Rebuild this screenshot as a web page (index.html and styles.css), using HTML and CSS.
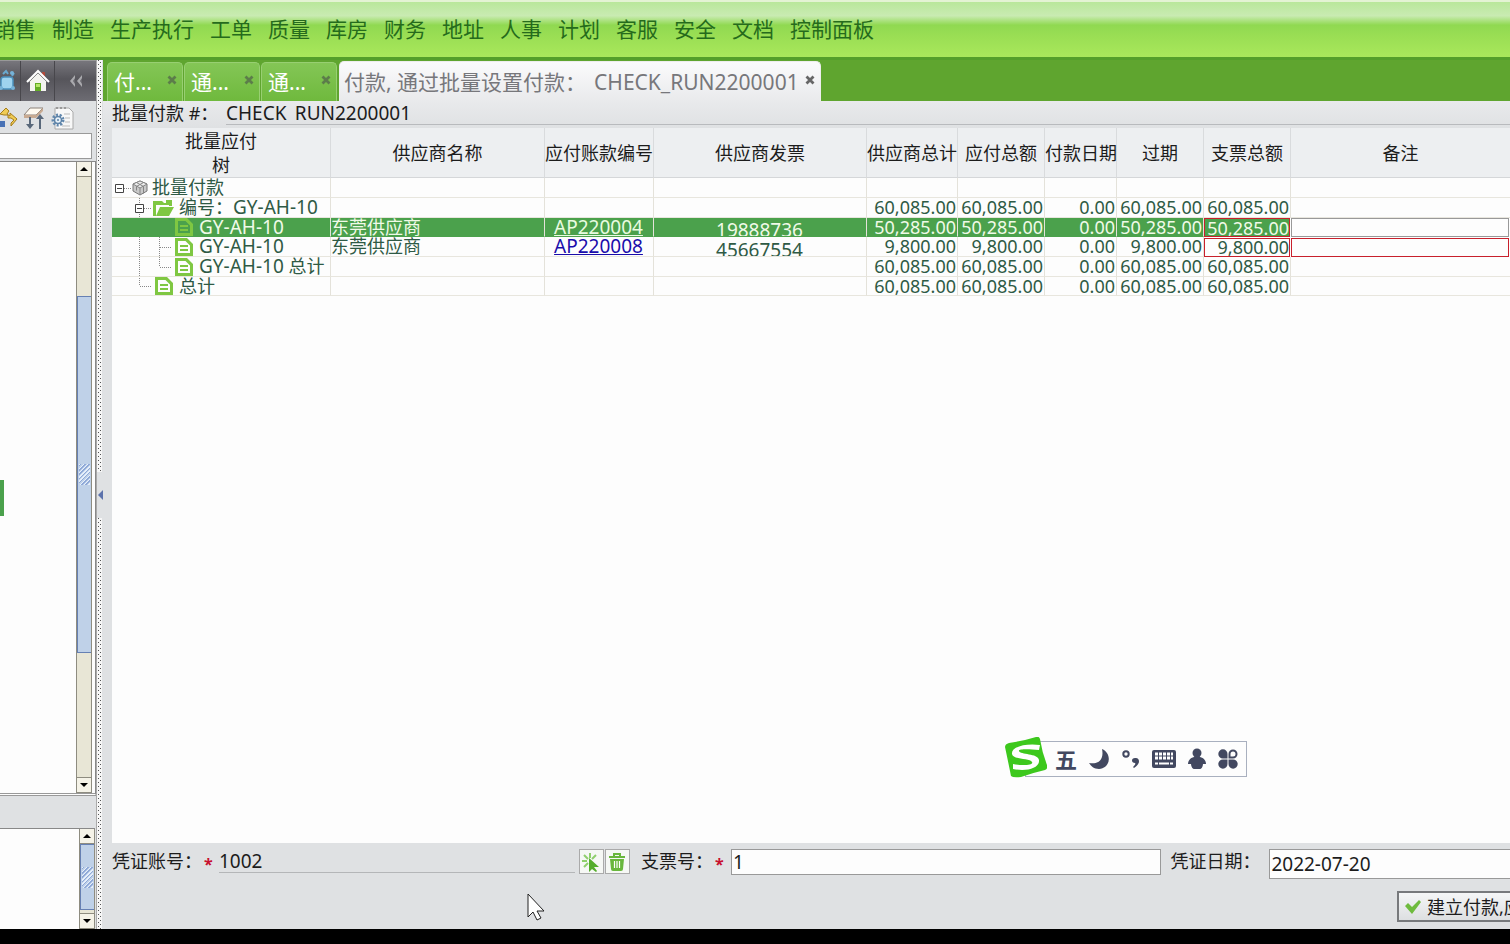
FILE: index.html
```html
<!DOCTYPE html>
<html lang="zh-CN">
<head>
<meta charset="utf-8">
<title>批量付款</title>
<link rel="stylesheet" href="styles.css">
</head>
<body>
<svg class="defs" aria-hidden="true">
  <symbol id="doc" viewBox="0 0 20 20"><path fill="#7fc742" fill-rule="evenodd" d="M1 1h12l6 6v12H1zM4 4v12h12V8.500L11.500 4z"/><path stroke="#7fc742" stroke-width="2" d="M6 9h8M6 13h8"/></symbol>
  <symbol id="close" viewBox="0 0 10 10"><path d="M1.500 1.500l7 7M8.500 1.500l-7 7" stroke="currentColor" stroke-width="2.800"/></symbol>
</svg>

<nav class="menu">
  <a href="#">销售</a><a href="#">制造</a><a href="#">生产执行</a><a href="#">工单</a><a href="#">质量</a><a href="#">库房</a><a href="#">财务</a><a href="#">地址</a><a href="#">人事</a><a href="#">计划</a><a href="#">客服</a><a href="#">安全</a><a href="#">文档</a><a href="#">控制面板</a>
</nav>

<div class="work">
  <aside class="side">
    <div class="side-head">
      <button class="icon-btn first" aria-label="刷新"><svg width="16" height="24" viewBox="0 0 16 24"><rect x="1" y="8" width="12" height="12" rx="3" fill="#9fd3ee" stroke="#4b91bd" stroke-width="1.500"/><path d="M3 5l3-3 2 3M12 7l2-3" stroke="#6aa9cf" stroke-width="2" fill="none"/><circle cx="12" cy="4" r="2" fill="#76b3d8"/><circle cx="1" cy="19" r="2" fill="#76b3d8"/><circle cx="13" cy="19" r="2" fill="#76b3d8"/></svg></button>
      <button class="icon-btn" aria-label="主页"><svg width="24" height="24" viewBox="0 0 24 24"><path d="M16 3h3v5h-3z" fill="#b04a3c"/><path d="M4 11l8-8 8 8v11H4z" fill="#f4f4f0"/><path d="M1 13L12 2l11 11" fill="none" stroke="#fff" stroke-width="2"/><path d="M3 13l9-9 9 9" fill="none" stroke="#8a8a8a"/><path d="M9 14h6v8H9z" fill="#63ac26"/><path d="M10 15h4v3h-4z" fill="#b5e66b"/></svg></button>
      <button class="icon-btn" aria-label="收起"><svg width="16" height="14" viewBox="0 0 16 14"><path d="M7 1L2 7l5 6zM14 1L9 7l5 6z" fill="#a9a9ad"/><path d="M7 4L5 7l2 3zM14 4l-2 3 2 3z" fill="#69686e"/></svg></button>
    </div>
    <div class="side-tools">
      <svg width="18" height="24" viewBox="0 0 18 24"><path d="M0 8l6-6 3 3-2 3 3 2 0-3 7 6-6 7v-3l3-3-3-2H8V9H4z" fill="#f0cc55" stroke="#a57d1b"/><path d="M0 15h5v6H0z" fill="#4972b5"/></svg>
      <svg width="22" height="24" viewBox="0 0 22 24"><path d="M7 2h13l-7 7H1z" fill="#fffaf0" stroke="#8c827a"/><path d="M1 9h12l7-7v3l-7 7H1z" fill="#c8aa91"/><path d="M7 11v8M17 23V11" stroke="#59687a" stroke-width="2"/><path d="M3 18h8l-4 5zM13 13h8l-4-5z" fill="#59687a"/></svg>
      <svg width="24" height="24" viewBox="0 0 24 24"><path d="M5 2h14l4 4v17H5z" fill="#f8f8f8" stroke="#aaa"/><path d="M6 2h12" stroke="#999" stroke-width="2" stroke-dasharray="2 2"/><path d="M14 8h6M15 12h5M15 16h5M12 20h8" stroke="#bbb"/><circle cx="8" cy="14" r="5" fill="none" stroke="#6288ad" stroke-width="3" stroke-dasharray="2 1.500"/><circle cx="8" cy="14" r="3.500" fill="#e8f1f8" stroke="#5d83a8" stroke-width="1.500"/><circle cx="8" cy="14" r="1" fill="#5d83a8"/></svg>
    </div>
    <input class="side-search" type="text" aria-label="搜索">
    <div class="side-tree">
      <div class="tree-space"><i class="tree-sel"></i></div>
      <div class="scroll">
        <button class="up" aria-label="向上"></button>
        <span class="before"></span><span class="thumb"><i></i></span><span class="after"></span>
        <button class="down" aria-label="向下"></button>
      </div>
    </div>
    <div class="side-low">
      <div class="tree-space"></div>
      <div class="scroll">
        <button class="up" aria-label="向上"></button>
        <span class="thumb full"><i></i></span><span class="rest"></span>
        <button class="down" aria-label="向下"></button>
      </div>
    </div>
  </aside>

  <div class="split"><span class="dots"></span><button class="fold" aria-label="折叠"></button><span class="dots"></span></div>

  <main class="main">
    <div class="tabs">
      <div class="tab"><span>付...</span><button class="x" aria-label="关闭"><svg width="10" height="10"><use href="#close"/></svg></button></div>
      <div class="tab"><span>通...</span><button class="x" aria-label="关闭"><svg width="10" height="10"><use href="#close"/></svg></button></div>
      <div class="tab"><span>通...</span><button class="x" aria-label="关闭"><svg width="10" height="10"><use href="#close"/></svg></button></div>
      <div class="tab active"><span>付款, 通过批量设置付款：</span><span class="run">CHECK_RUN2200001</span><button class="x" aria-label="关闭"><svg width="10" height="10"><use href="#close"/></svg></button></div>
    </div>

    <div class="caption"><span class="cap-label">批量付款 #：</span><span class="cap-value"><span class="cap-text">CHECK_RUN2200001</span></span></div>

    <div class="sheet">
      <table class="grid">
        <colgroup><col class="c-tree"><col class="c-name"><col class="c-ap"><col class="c-inv"><col class="c-total"><col class="c-sum"><col class="c-date"><col class="c-sum"><col class="c-sum"><col></colgroup>
        <thead>
          <tr><th>批量应付<br>树</th><th>供应商名称</th><th>应付账款编号</th><th>供应商发票</th><th>供应商总计</th><th>应付总额</th><th>付款日期</th><th>过期</th><th>支票总额</th><th>备注</th></tr>
        </thead>
        <tbody>
          <tr>
            <td><div class="node"><svg width="20" height="20"><path d="M3.500 6.500h8v8h-8zM5 10.500h5" fill="#fff" stroke="#444"/><path d="M12 10.500h8" stroke="#888" stroke-dasharray="1 1"/></svg><svg width="16" height="20" viewBox="0 0 16 20"><path d="M8 3l7 3v7l-7 4-7-4V6z" fill="#c9c9c9" stroke="#777"/><path d="M8 3l7 3-7 4-7-4z" fill="#ededed" stroke="#858585"/><path d="M8 10v7M4.500 4.500l7 4v7M11.500 4.500l-7 4v4" fill="none" stroke="#858585"/></svg><span class="near">批量付款</span></div></td>
            <td></td><td></td><td></td><td></td><td></td><td></td><td></td><td></td><td></td>
          </tr>
          <tr>
            <td><div class="node"><svg width="40" height="20"><path d="M27.500 0v20" stroke="#888" stroke-dasharray="1 1"/><path d="M23.500 6.500h8v8h-8zM25 10.500h5" fill="#fff" stroke="#444"/><path d="M32 10.500h7" stroke="#888" stroke-dasharray="1 1"/></svg><svg width="22" height="20" viewBox="0 0 22 20"><path d="M1 3h9l2 2h8v3h-3V7H4v11H1z" fill="#7fc742"/><path d="M14 2h6v3h-6zM8 9h14l-5 9H4z" fill="#7fc742"/></svg><span>编号：<span class="code">GY-AH-10</span></span></div></td>
            <td></td><td></td><td></td><td class="num">60,085.00</td><td class="num">60,085.00</td><td class="num">0.00</td><td class="num">60,085.00</td><td class="num">60,085.00</td><td></td>
          </tr>
          <tr class="sel">
            <td><div class="node"><svg width="62" height="20"></svg><svg width="20" height="20"><use href="#doc"/></svg><span><span class="code">GY-AH-10</span></span></div></td>
            <td>东莞供应商</td><td class="mid"><a href="#">AP220004</a></td><td class="mid inv"><div>19888736</div></td><td class="num">50,285.00</td><td class="num">50,285.00</td><td class="num">0.00</td><td class="num">50,285.00</td><td class="edit"><input class="amount" type="text" aria-label="支票总额" value="50,285.00"></td><td class="edit"><input class="note plain" type="text" aria-label="备注"></td>
          </tr>
          <tr>
            <td><div class="node"><svg width="62" height="20"><path d="M27.500 0v20M47.500 0v20M48 10.500h11" stroke="#888" stroke-dasharray="1 1"/></svg><svg width="20" height="20"><use href="#doc"/></svg><span><span class="code">GY-AH-10</span></span></div></td>
            <td>东莞供应商</td><td class="mid"><a href="#">AP220008</a></td><td class="mid inv"><div>45667554</div></td><td class="num">9,800.00</td><td class="num">9,800.00</td><td class="num">0.00</td><td class="num">9,800.00</td><td class="edit"><input class="amount" type="text" aria-label="支票总额" value="9,800.00"></td><td class="edit"><input class="note" type="text" aria-label="备注"></td>
          </tr>
          <tr>
            <td><div class="node"><svg width="62" height="20"><path d="M27.500 0v20M47.500 0v10M48 10.500h11" stroke="#888" stroke-dasharray="1 1"/></svg><svg width="20" height="20"><use href="#doc"/></svg><span><span class="code">GY-AH-10</span> 总计</span></div></td>
            <td></td><td></td><td></td><td class="num">60,085.00</td><td class="num">60,085.00</td><td class="num">0.00</td><td class="num">60,085.00</td><td class="num">60,085.00</td><td></td>
          </tr>
          <tr>
            <td><div class="node"><svg width="42" height="20"><path d="M27.500 0v10M28 10.500h11" stroke="#888" stroke-dasharray="1 1"/></svg><svg width="20" height="20"><use href="#doc"/></svg><span>总计</span></div></td>
            <td></td><td></td><td></td><td class="num">60,085.00</td><td class="num">60,085.00</td><td class="num">0.00</td><td class="num">60,085.00</td><td class="num">60,085.00</td><td></td>
          </tr>
        </tbody>
      </table>
    </div>

    <form class="pay">
      <div class="fields">
        <label class="l-acct" for="acct">凭证账号：<b>*</b></label>
        <input class="line" id="acct" type="text" value="1002">
        <button type="button" class="tool" aria-label="选择"><svg width="20" height="20" viewBox="0 0 20 20"><path d="M9 1v5M3 3l4 4M1 9h5M3 15l4-4M15 3l-4 4M9 13v3" stroke="#8fcf6c" stroke-width="2"/><path d="M8 6l10 9h-5l3 4-1 1-4-3-3 3z" fill="#54ad2b"/></svg></button>
        <button type="button" class="tool" aria-label="删除"><svg width="20" height="20" viewBox="0 0 20 20"><path d="M2 5h16M7 4V2h6v2" fill="none" stroke="#69b73d" stroke-width="2"/><path d="M3 7h14l-1 10q0 2-2 2H6q-2 0-2-2z" fill="#69b73d"/><path d="M7.500 9v7M10 9v7M12.500 9v7" stroke="#fff" stroke-width="1.200"/></svg></button>
        <label class="l-check" for="check">支票号：<b>*</b></label>
        <input class="box" id="check" type="text" value="1">
        <label class="l-date" for="date">凭证日期：</label>
        <input class="box date" id="date" type="text" value="2022-07-20">
      </div>
      <div class="actions">
        <button type="button" class="submit"><svg width="18" height="16" viewBox="0 0 18 16"><path d="M1 7l3-3 4 4 7-7 2 2-9 12z" fill="#6fbb3e"/></svg>建立付款,应</button>
      </div>
    </form>
  </main>
</div>

<div class="ime">
  <svg class="ime-logo" width="42" height="42" viewBox="0 0 42 42"><path d="M4 6Q18 4 31 0q3-1 4 2 2 13 7 26 1 4-2 5-13 3-24 7-8 1-10-1Q3 24 0 10 0 7 4 6z" fill="#3dc81d"/><path d="M35 8C20 6 6 10 7 17c1 6 18 4 20 8 2 3-9 4-19 2v5c14 3 27-1 26-9-1-7-19-5-20-9-1-2 9-2 20-1z" fill="#fff"/></svg>
  <div class="ime-bar">
    <span class="ime-mode">五</span>
    <svg width="22" height="22" viewBox="0 0 22 22"><path d="M14 1c10 4 9 19-3 20-5 0-8-3-10-6 11 2 15-5 13-14z"/></svg>
    <svg width="20" height="22" viewBox="0 0 20 22"><circle cx="5" cy="6" r="2.700" fill="none" stroke="#424860" stroke-width="2"/><path d="M14 10c5-1 6 6-1 10l-1-1c2-2 3-3 2-4-4 0-4-5 0-5z"/></svg>
    <svg width="24" height="20" viewBox="0 0 24 20"><rect y="1" width="24" height="18" rx="2"/><path d="M3 5h18M3 9h18" stroke="#fff" stroke-width="3" stroke-dasharray="3 1"/><path d="M3 14.500h3M7 14.500h10M18 14.500h3" stroke="#fff" stroke-width="2"/></svg>
    <svg width="20" height="22" viewBox="0 0 20 22"><circle cx="10" cy="5" r="4.500"/><path d="M7 9h6c4 1 6 4 6 7h-3c0 3-2 5-3 5H7c-1 0-3-2-3-5H1c0-3 2-6 6-7z"/></svg>
    <svg width="20" height="20" viewBox="0 0 20 20"><path d="M9.500 9.500H5a4.600 4.600 0 1 1 4.500-4.500zM9.500 10.500V15a4.600 4.600 0 1 1-4.500-4.500zM10.500 10.500H15a4.600 4.600 0 1 1-4.500 4.500z"/><path d="M11.500 8.500V5a3.500 3.500 0 1 1 3.500 3.500z" fill="none" stroke="#424860" stroke-width="2"/></svg>
  </div>
</div>
<svg class="cursor" width="20" height="28" viewBox="0 0 20 28"><path d="M1 1v23l5-5 4 8 4-2-4-7h7z" fill="#fff" stroke="#222"/></svg>
</body>
</html>
```
FILE: styles.css
```css
* { box-sizing: border-box; }
body {
  margin: 0;
  height: 100vh;
  display: flex;
  flex-direction: column;
  overflow: hidden;
  background: #dfe1e3;
  border-bottom: 15px solid #000;
  font: 18px/20px "Noto Sans", "Noto Sans CJK SC", sans-serif;
  color: #1c1c1c;
}
button, input { font: inherit; color: inherit; margin: 0; padding: 0; border: 0; border-radius: 0; }
button { background: none; display: flex; align-items: center; justify-content: center; flex: none; }
input { min-width: 0; outline: 0; }
svg { display: block; flex: none; }
.defs { position: absolute; width: 0; height: 0; }

.menu {
  flex: none;
  height: 60px;
  display: flex;
  gap: 16px;
  align-items: center;
  padding-bottom: 1px;
  text-indent: 0;
  border-top: 2px solid #e4f3d4;
  border-bottom: 3px solid #549f2a;
  background: linear-gradient(#b9e79b, #c9ebb2 25%, #90d951 42%, #9ade54 62%, #a9e85b);
}
.menu a { color: #256b1c; text-decoration: none; font-size: 21px; line-height: 28px; white-space: nowrap; }
.menu a:first-child { margin-left: -6px; }

.work { flex: 1; min-height: 0; display: flex; }

.side { width: 96px; flex: none; display: flex; flex-direction: column; min-height: 0; }
.side-head { height: 41px; flex: none; display: flex; border-top: 1px solid #999; background: linear-gradient(#77767c, #56555b 45%, #6d6c73); }
.icon-btn { width: 34px; border-left: 1px solid #48474c; }
.icon-btn.first { width: 20px; border-left: 0; justify-content: flex-start; }
.icon-btn:last-child { flex: 1; }
.side-tools { height: 32px; flex: none; display: flex; gap: 5px; align-items: center; padding-top: 2px; }
.side-search { height: 26px; width: 92px; flex: none; border: 1px solid #999; border-left: 0; background: #fdfdfd; }
.side-tree { flex: 1; min-height: 0; margin-top: 2px; display: flex; border: 1px solid #888; border-left: 0; border-bottom: 3px double #999; padding-right: 3px; background: #fdfdfd; }
.side-low { flex: none; height: 101px; margin-top: 32px; display: flex; border-top: 1px solid #888; margin-right: 1px; background: #fdfdfd; }
.tree-space { flex: 1; display: flex; align-items: center; }
.tree-sel { width: 4px; height: 36px; background: #4ba14c; margin-top: 41px; }
.scroll { width: 16px; flex: none; display: flex; flex-direction: column; border: 1px solid #8e8c80; border-top: 0; background: #e8e6d6; }
.scroll button { height: 15px; background: #f5f3e8; border: 0 solid #8e8c80; }
.scroll .up { border-bottom-width: 1px; }
.scroll .down { border-top-width: 1px; }
.up::after, .down::after { content: ""; border: 4px solid transparent; border-top-width: 0; border-bottom: 4px solid #000; }
.down::after { border-bottom-width: 0; border-top: 4px solid #000; }
.before { flex: 119; }
.thumb { flex: 356; display: flex; align-items: center; justify-content: center; background: #bfd1e8; border: 1px solid #6680b3; border-width: 1px 0 1px 1px; }
.after { flex: 124; }
.rest { height: 3px; }
.thumb i { width: 11px; height: 21px; background: repeating-linear-gradient(135deg, #e6effb 0 1px, #8fa9d8 1px 2px, #bfd1e8 2px 3px); }

.split { width: 7px; flex: none; display: flex; flex-direction: column; border-left: 1px solid #aaa; }
.dots {
  flex: 1;
  width: 6px;
  background:
    linear-gradient(#555 1px, transparent 1px) 1px 0 / 1px 4px repeat-y,
    linear-gradient(#555 1px, transparent 1px) 3px 2px / 1px 4px repeat-y,
    linear-gradient(90deg, #f6f6f6 5px, #dfe1e3 5px);
}
.fold { height: 46px; }
.fold::after { content: ""; border: 5px solid transparent; border-left: 0; border-right: 5px solid #5c72ac; }

.main { flex: 1; min-width: 0; display: flex; flex-direction: column; }
.tabs { height: 41px; flex: none; display: flex; gap: 1px; align-items: flex-end; padding: 1px 4px 0; background: #5fa52f; }
.tab { height: 39px; width: 76px; display: flex; align-items: center; justify-content: space-between; padding: 0 5px 0 6px; border: 1px solid #98cf72; border-bottom: 0; border-radius: 5px 5px 0 0; background: linear-gradient(#84c656, #6fb93d); color: #fff; font-size: 21px; line-height: 28px; white-space: nowrap; }
.tab .x { width: 10px; height: 10px; color: #5c7d4a; margin-bottom: 4px; }
.tab.active { height: 40px; width: auto; margin-left: 1px; padding-left: 4px; background: linear-gradient(#fbfbfc, #e9eaec); border-color: #eee; color: #77777b; }
.tab.active .x { color: #666; margin-left: 6px; }
.run { margin-left: 8px; }

.caption { height: 27px; flex: none; display: flex; padding-left: 9px; align-items: flex-start; line-height: 24px; background: linear-gradient(#e9eaec, #dfe1e3); }
.cap-label { width: 114px; flex: none; }
.cap-value { flex: 1; height: 24px; border-bottom: 1px solid #b8babd; }
.cap-text { display: block; height: 20px; overflow: hidden; font-size: 19px; }

.sheet { flex: 1; min-height: 0; overflow: hidden; margin-left: 9px; background: #fdfdfd; }
.grid { width: 100%; table-layout: fixed; border-collapse: separate; border-spacing: 0; }
.c-tree { width: 219px; }
.c-name { width: 214px; }
.c-ap { width: 109px; }
.c-inv { width: 213px; }
.c-total { width: 91px; }
.c-sum { width: 87px; }
.c-date { width: 72px; }
.grid th { height: 50px; padding: 1px 0 0; font-weight: 400; line-height: 24px; text-align: center; white-space: nowrap; background: #edeff1; border-right: 1px solid #d9dbdd; border-bottom: 1px solid #d5d7d9; }
.grid td { height: 20px; padding: 0 1px 0 0; border-right: 1px solid #e4e2da; border-bottom: 1px solid #e8e6de; color: #2f5a45; line-height: 19px; white-space: nowrap; overflow: hidden; }
.grid tr:nth-child(3n) td { height: 19px; line-height: 18px; }
.grid td:last-child, .grid th:last-child { border-right: 0; }
.node { display: flex; align-items: center; height: 18px; }
.node > span { padding-left: 5px; }
.node .near { padding-left: 4px; }
.code { font-size: 19px; }
.grid .num { text-align: right; }
.mid { text-align: center; font-size: 19px; }
.mid a { color: #1a0dab; }
.inv div { height: 18px; line-height: 24px; overflow: hidden; }
.grid .sel td { background: #4ba14c; color: #f0fae8; border-bottom-color: #4ba14c; }
.sel a { color: #e9fbe0; }
.grid .edit { padding: 0 1px 0 0; border: 0; }
.grid .sel .edit { background: #fdfdfd; }
.edit input { display: block; width: 100%; height: 19px; border: 1px solid #c8202c; background: #fdfdfd; line-height: 17px; }
.edit .amount { text-align: right; }
.sel .amount { background: #4ba14c; }
.edit .plain { border-color: #999; }

.pay { flex: none; height: 86px; padding: 6px 0 0 9px; overflow: hidden; background: #dfe1e3; }
.fields { display: flex; align-items: flex-start; line-height: 24px; }
.fields input { font-size: 19px; }
.fields b { color: #c8102e; font-size: 16px; font-weight: 700; vertical-align: -2px; margin-left: 2px; }
.l-acct { width: 107px; flex: none; }
.l-check { width: 90px; flex: none; margin-left: 10px; }
.l-date { width: 99px; flex: none; margin-left: 9px; }
.line { flex: 358; height: 24px; border-bottom: 1px solid #b4b6b8; background: transparent; margin-right: 4px; }
.tool { width: 25px; height: 25px; margin-right: 1px; border: 1px solid #aaa; background: #f6f8f5; }
.box { flex: 430; height: 26px; border: 1px solid #999; background: #fdfdfd; padding-left: 1px; }
.date { flex: 240; height: 30px; border-right: 0; }
.actions { display: flex; justify-content: flex-end; margin-top: 12px; }
.submit { height: 31px; width: 128px; margin-right: -15px; padding-left: 5px; gap: 5px; justify-content: flex-start; border: 2px solid #77797c; background: linear-gradient(#f5f6f7, #dddfe1); white-space: nowrap; }

.ime { position: absolute; left: 1005px; top: 737px; }
.ime-logo { position: absolute; left: 0; top: 0; }
.ime-bar { display: flex; align-items: center; gap: 11px; height: 36px; margin: 4px 0 0 20px; padding: 0 8px 0 29px; border: 1px solid #a9b0bf; background: #fdfdfd; fill: #424860; }
.ime-mode { color: #424860; font-size: 22px; font-weight: 700; }
.cursor { position: absolute; left: 527px; top: 893px; }
```
